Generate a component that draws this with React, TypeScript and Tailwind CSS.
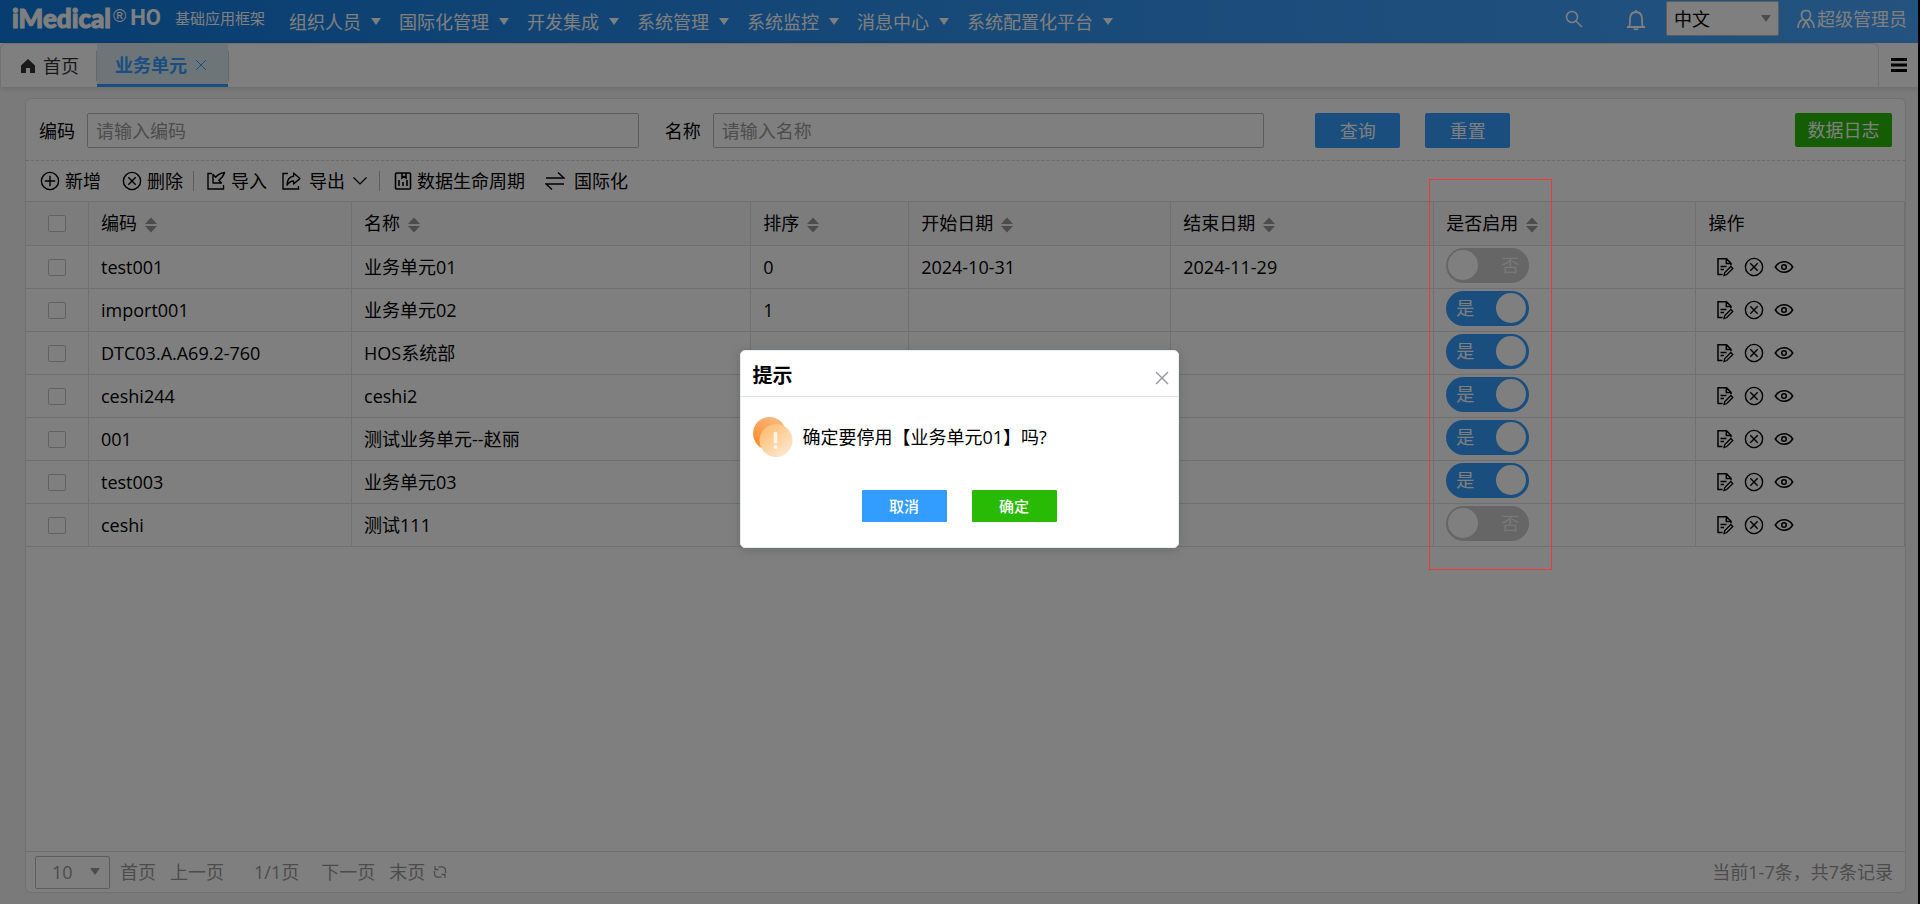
import React from "react";

const TEXT = "font-['Open_Sans','Noto_Sans_CJK_SC',sans-serif]";

const navItems = ["组织人员", "国际化管理", "开发集成", "系统管理", "系统监控", "消息中心", "系统配置化平台"];

type Row = { code: string; name: string; order: string; start: string; end: string; on: boolean };

const rows: Row[] = [
  { code: "test001", name: "业务单元01", order: "0", start: "2024-10-31", end: "2024-11-29", on: false },
  { code: "import001", name: "业务单元02", order: "1", start: "", end: "", on: true },
  { code: "DTC03.A.A69.2-760", name: "HOS系统部", order: "", start: "", end: "", on: true },
  { code: "ceshi244", name: "ceshi2", order: "", start: "", end: "", on: true },
  { code: "001", name: "测试业务单元--赵丽", order: "", start: "", end: "", on: true },
  { code: "test003", name: "业务单元03", order: "", start: "", end: "", on: true },
  { code: "ceshi", name: "测试111", order: "", start: "", end: "", on: false },
];

const columns = [
  { label: "编码", width: "w-[14%]", sortable: true },
  { label: "名称", width: "w-[21.25%]", sortable: true },
  { label: "排序", width: "w-[8.4%]", sortable: true },
  { label: "开始日期", width: "w-[13.95%]", sortable: true },
  { label: "结束日期", width: "w-[14%]", sortable: true },
  { label: "是否启用", width: "w-[13.95%]", sortable: true },
  { label: "操作", width: "", sortable: false },
];

function Caret({ className }: { className?: string }) {
  return (
    <svg viewBox="0 0 10 8" className={className ?? "h-2 w-2.5"} fill="currentColor" aria-hidden="true">
      <path d="M0 0h10L5 7z" />
    </svg>
  );
}

function CircleIcon({ cross }: { cross?: boolean }) {
  return (
    <svg viewBox="0 0 20 20" className="size-5 shrink-0" fill="none" stroke="currentColor" strokeWidth="1.4" aria-hidden="true">
      <circle cx="10" cy="10" r="8.6" />
      {cross ? <path d="M6.3 6.3l7.4 7.4M13.7 6.3l-7.4 7.4" /> : <path d="M10 4.8v10.4M4.8 10h10.4" />}
    </svg>
  );
}

function ImportIcon() {
  return (
    <svg viewBox="0 0 20 20" className="size-5 shrink-0" fill="none" stroke="currentColor" strokeWidth="1.4" aria-hidden="true">
      <path d="M6 2.500H2V18h15.500v-4" />
      <path d="M7 3.500v8.500h8.500l-2.700-2.700c2.700-1.800 4.700-4.300 5.700-7.800-3.500.5-6.500 1.800-8.800 4.700z" strokeLinejoin="round" />
    </svg>
  );
}

function ExportIcon() {
  return (
    <svg viewBox="0 0 20 20" className="size-5 shrink-0" fill="none" stroke="currentColor" strokeWidth="1.4" aria-hidden="true">
      <path d="M7 2.500H2V18h15.500v-3" />
      <path d="M12.600 2l6.200 5.600-6.200 5.400v-3c-3 0-5 1.400-6.600 4.200 0-5 2.400-8.400 6.600-9z" strokeLinejoin="round" />
    </svg>
  );
}

function ReportIcon() {
  return (
    <svg viewBox="0 0 18 20" className="h-5 w-[18px] shrink-0" fill="none" stroke="currentColor" strokeWidth="1.6" aria-hidden="true">
      <rect x="1.5" y="2" width="15" height="16" rx="1" />
      <path d="M8 2v5l2-1.400L12 7V2M5 9v6M9 11v4M13 9v6" />
    </svg>
  );
}

function SwapIcon() {
  return (
    <svg viewBox="0 0 20 20" className="size-5 shrink-0" fill="none" stroke="currentColor" strokeWidth="1.4" aria-hidden="true">
      <path d="M1 7h18L13 1.500M19 13H1l6 5.500" />
    </svg>
  );
}

function EditIcon() {
  return (
    <svg viewBox="0 0 18 20" className="h-5 w-[18px]" fill="none" stroke="currentColor" strokeWidth="1.5" aria-hidden="true">
      <path d="M6.500 17.500H2V1.800h8.500l4.500 4.500v2M10.300 2v4.500H15M4.500 9.500h6M4.500 12.500h3.500" />
      <path d="M8 18.500l.8-3 6-6 2 2-6 6z" strokeWidth="1.3" />
    </svg>
  );
}

function EyeIcon() {
  return (
    <svg viewBox="0 0 20 20" className="size-5" fill="none" stroke="currentColor" strokeWidth="1.5" aria-hidden="true">
      <path d="M1.300 10C3.500 6.500 6.500 4.800 10 4.800s6.500 1.700 8.700 5.200c-2.200 3.500-5.200 5.200-8.700 5.200S3.500 13.500 1.300 10z" />
      <circle cx="10" cy="10" r="2.3" />
    </svg>
  );
}

function SortIcon() {
  return (
    <svg viewBox="0 0 12 16" className="mt-1 h-4 w-3" fill="#999999" aria-hidden="true">
      <path d="M6 0.500L12 7H0zM6 15.500L0 9h12z" />
    </svg>
  );
}

function Checkbox({ label }: { label: string }) {
  return (
    <input
      type="checkbox"
      aria-label={label}
      className="block h-[17px] w-[18px] appearance-none rounded-xs border border-[#c4c4c4] bg-white"
    />
  );
}

function Toggle({ on, label }: { on: boolean; label: string }) {
  return (
    <button
      type="button"
      role="switch"
      aria-checked={on}
      aria-label={label}
      className={
        on
          ? "flex h-[35px] w-[83px] items-center justify-between rounded-full bg-[#339dff] pr-[3px] pl-2.5 text-white"
          : "flex h-[35px] w-[83px] flex-row-reverse items-center justify-between rounded-full bg-[#cccccc] pr-2.5 pl-0.5 text-[#f0f0f0]"
      }
    >
      <span>{on ? "是" : "否"}</span>
      <span className="size-[30px] rounded-full bg-white" />
    </button>
  );
}

function Header() {
  return (
    <header className="flex h-[43px] shrink-0 items-center bg-linear-to-r from-[#0e7ae0] via-[#2b91f0] via-45% to-[#48a6ff] text-white">
      <div className="ml-3 flex h-9 items-center self-start">
        <span className="font-[Lato,'Open_Sans',sans-serif] text-[26px] font-black [-webkit-text-stroke:1px_white]">iMedical</span>
        <span className="ml-0.5 pb-1 font-['Liberation_Sans',sans-serif] text-lg">®</span>
        <span className="ml-1 font-[Roboto,sans-serif] text-[22px] font-bold">HO</span>
        <span className="ml-3.5 text-[15px]">基础应用框架</span>
      </div>
      <nav className="ml-6 flex items-center gap-[18px]">
        {navItems.map((item) => (
          <button key={item} type="button" className="flex items-center gap-2.5 whitespace-nowrap">
            {item}
            <Caret />
          </button>
        ))}
      </nav>
      <div className="ml-auto flex h-[37px] items-center self-start pr-[11px]">
        <button type="button" aria-label="搜索" className="mr-[43px]">
          <svg viewBox="0 0 18 18" className="size-[18px]" fill="none" stroke="currentColor" strokeWidth="1.5">
            <circle cx="7" cy="7" r="5.5" />
            <path d="M11 11l6 6" />
          </svg>
        </button>
        <button type="button" aria-label="通知" className="mr-5 pt-0.5">
          <svg viewBox="0 0 20 22" className="h-[22px] w-5" fill="none" stroke="currentColor" strokeWidth="1.8">
            <path d="M1 18h18M3 18c1-1.500 1-3 1-7.500C4 6 6 3 10 3s6 3 6 7.500c0 4.500 0 6 1 7.500M10 3V1M8 19.500c.6 1.300 3.400 1.300 4 0" />
          </svg>
        </button>
        <div className="relative mr-[18px]">
          <select aria-label="语言" className="block h-[35px] w-[113px] appearance-none rounded-xs border border-[#bbbbbb] bg-white pl-[7px] text-black">
            <option>中文</option>
          </select>
          <Caret className="pointer-events-none absolute top-3.5 right-2 h-2 w-2.5 text-[#999999]" />
        </div>
        <button type="button" className="flex items-center gap-0.5">
          <svg viewBox="0 0 18 20" className="h-5 w-[18px]" fill="none" stroke="currentColor" strokeWidth="1.7" aria-hidden="true">
            <path d="M9 1.500c3 0 4.500 2 4.500 4.500 0 3-2 5.500-4.500 5.500S4.500 9 4.500 6c0-2.500 1.500-4.500 4.500-4.500zM5.500 10.500C2.500 12 1 15 1 19M12.500 10.500c3 1.500 4.500 4.500 4.500 8.500M5.500 19L9 12l3.500 7" />
          </svg>
          超级管理员
        </button>
      </div>
    </header>
  );
}

function TabBar() {
  return (
    <div className="flex h-11 shrink-0 bg-white shadow-[0_2px_6px_rgba(0,0,0,0.12)]">
      <div className="flex flex-1 items-center rounded-t-md border-x border-t border-[#e0e0e0]">
        <a href="#home" className="flex w-[95px] items-center justify-center gap-2 pl-[3px] text-[#333333]">
          <svg viewBox="0 0 14 14" className="size-3.5" fill="currentColor" aria-hidden="true">
            <path d="M7 0l7 6.500V14H9V9H5v5H0V6.500z" />
          </svg>
          首页
        </a>
        <span className="h-[30px] w-px bg-[#cccccc]" />
        <div className="flex w-[131px] items-center gap-2 self-stretch border-b-[3px] border-[#339dff] bg-[#daebf2] pt-0.5 pl-[18px] text-[#339dff]">
          <a href="#unit" className="font-bold">业务单元</a>
          <button type="button" aria-label="关闭">
            <svg viewBox="0 0 12 12" className="size-3" fill="none" stroke="currentColor" aria-hidden="true">
              <path d="M1 1l10 10M11 1L1 11" />
            </svg>
          </button>
        </div>
        <span className="h-[30px] w-px bg-[#cccccc]" />
      </div>
      <button type="button" aria-label="菜单" className="flex w-[39px] items-center justify-center text-black">
        <svg viewBox="0 0 16 14" className="h-3.5 w-4" fill="currentColor" aria-hidden="true">
          <path d="M0 0h16v3H0zM0 5.500h16v3H0zM0 11h16v3H0z" />
        </svg>
      </button>
    </div>
  );
}

function SearchForm() {
  const input = "ml-3 h-[35px] min-w-0 flex-1 rounded-xs border border-[#bbbbbb] bg-white px-2 placeholder:text-[#999999]";
  return (
    <form className="flex h-[62px] shrink-0 items-center border-b border-dashed border-[#d4d4d4] pt-0.5 pr-[13px] pl-[13px]">
      <div className="flex flex-[68] items-center">
        <label htmlFor="code">编码</label>
        <input id="code" placeholder="请输入编码" className={input} />
        <label htmlFor="name" className="ml-[26px]">名称</label>
        <input id="name" placeholder="请输入名称" className={input} />
      </div>
      <div className="ml-[51px] flex flex-[32] gap-[25px] text-white">
        <button type="button" className="h-[35px] w-[85px] rounded-xs bg-[#339dff]">查询</button>
        <button type="button" className="h-[35px] w-[85px] rounded-xs bg-[#339dff]">重置</button>
        <button type="button" className="ml-auto h-[34px] w-[97px] rounded-xs bg-[#28ba05]">数据日志</button>
      </div>
    </form>
  );
}

function Toolbar() {
  const item = "flex items-center gap-[5px]";
  return (
    <div className="flex h-10 shrink-0 items-center pl-3.5">
      <button type="button" className={item}><CircleIcon />新增</button>
      <button type="button" className={item + " ml-[21px]"}><CircleIcon cross />删除</button>
      <span className="mr-3 ml-2.5 h-5 w-px bg-[#bbbbbb]" />
      <button type="button" className={item}><ImportIcon />导入</button>
      <button type="button" className="ml-3.5 flex items-center gap-2">
        <ExportIcon />导出
        <svg viewBox="0 0 14 8" className="h-2 w-3.5" fill="none" stroke="currentColor" strokeWidth="1.2" aria-hidden="true">
          <path d="M.5 .5L7 7l6.500-6.500" />
        </svg>
      </button>
      <span className="mr-3.5 ml-3 h-5 w-px bg-[#bbbbbb]" />
      <button type="button" className={item}><ReportIcon />数据生命周期</button>
      <button type="button" className="ml-5 flex items-center gap-[9px]"><SwapIcon />国际化</button>
    </div>
  );
}

function UnitTable() {
  const cell = "border-r border-b border-[#e0e0e0] px-3 py-0 text-left font-normal whitespace-nowrap";
  return (
    <table className="w-full table-fixed border-separate border-spacing-0 border-t border-[#e0e0e0]">
      <thead>
        <tr className="h-11 bg-[#f9f9f9]">
          <th className={cell + " w-[63px]"}>
            <div className="flex justify-center"><Checkbox label="全选" /></div>
          </th>
          {columns.map((c) => (
            <th key={c.label} className={cell + " " + c.width}>
              <div className="flex items-center gap-2 pb-0.5">
                {c.label}
                {c.sortable && <SortIcon />}
              </div>
            </th>
          ))}
        </tr>
      </thead>
      <tbody>
        {rows.map((r) => (
          <tr key={r.code} className="h-[43px]">
            <td className={cell}>
              <div className="flex justify-center"><Checkbox label={r.code} /></div>
            </td>
            <td className={cell}>{r.code}</td>
            <td className={cell}>{r.name}</td>
            <td className={cell}>{r.order}</td>
            <td className={cell}>{r.start}</td>
            <td className={cell}>{r.end}</td>
            <td className={cell}>
              <div className="pb-1"><Toggle on={r.on} label={r.name} /></div>
            </td>
            <td className={cell}>
              <div className="flex items-center gap-2.5 pl-2">
                <button type="button" aria-label="编辑"><EditIcon /></button>
                <button type="button" aria-label="删除"><CircleIcon cross /></button>
                <button type="button" aria-label="查看"><EyeIcon /></button>
              </div>
            </td>
          </tr>
        ))}
      </tbody>
    </table>
  );
}

function Pagination() {
  return (
    <footer className="flex h-[41px] shrink-0 items-center border-t border-[#e0e0e0] pr-3 pl-[9px] text-[#999999]">
      <div className="relative">
        <select aria-label="每页条数" className="block h-[33px] w-[75px] appearance-none rounded-xs border border-[#bbbbbb] bg-white pl-4">
          <option>10</option>
        </select>
        <Caret className="pointer-events-none absolute top-3 right-2.5 h-2 w-2.5" />
      </div>
      <button type="button" className="ml-2.5">首页</button>
      <button type="button" className="ml-3.5">上一页</button>
      <span className="ml-[30px]">1/1页</span>
      <button type="button" className="ml-[22px]">下一页</button>
      <button type="button" className="ml-3.5">末页</button>
      <button type="button" aria-label="刷新" className="ml-2">
        <svg viewBox="0 0 14 14" className="size-3.5" fill="none" stroke="currentColor" strokeWidth="1.3">
          <path d="M5.500 1.800H9A3.500 3.500 0 0 1 12.500 5.300V8M8.500 12.200H5A3.500 3.500 0 0 1 1.500 8.700V6M2 1v3.500h3.500M12 13V9.500H8.500" />
        </svg>
      </button>
      <span className="ml-auto">当前1-7条，共7条记录</span>
    </footer>
  );
}

function WarningIcon() {
  return (
    <svg viewBox="0 0 40 40" className="size-10 shrink-0" aria-hidden="true">
      <defs>
        <linearGradient id="back" x1="1" y1="0" x2="0.3" y2="1">
          <stop offset="0" stopColor="#f8c18e" />
          <stop offset="1" stopColor="#fb8c2c" />
        </linearGradient>
        <linearGradient id="front" x1="0" y1="0" x2="0.8" y2="1">
          <stop offset="0" stopColor="#ffb765" />
          <stop offset="1" stopColor="#ffe8d2" />
        </linearGradient>
      </defs>
      <circle cx="16.5" cy="16.5" r="16.5" fill="url(#back)" />
      <circle cx="23" cy="23.5" r="16.5" fill="url(#front)" />
      <path d="M22.500 16.500v8.500" stroke="#fff4e8" strokeWidth="3.6" strokeLinecap="round" />
      <circle cx="22.5" cy="30" r="2" fill="#fff4e8" />
    </svg>
  );
}

function ConfirmDialog() {
  return (
    <div className="absolute inset-0 flex items-center justify-center bg-black/50 pb-1.5">
      <div role="dialog" aria-modal="true" aria-labelledby="dialog-title" className="w-[439px] rounded-[5px] border border-[#e8ecf5] bg-white shadow-[0_2px_12px_rgba(0,0,0,0.15)]">
        <div className="flex h-[46px] items-center justify-between border-b border-[#dfe1e6] pt-1 pr-[9px] pl-3">
          <h2 id="dialog-title" className="text-xl font-bold">提示</h2>
          <button type="button" aria-label="关闭" className="pt-1">
            <svg viewBox="0 0 14 14" className="size-3.5" fill="none" stroke="#909399" strokeWidth="1.3" aria-hidden="true">
              <path d="M1 1l12 12M13 1L1 13" />
            </svg>
          </button>
        </div>
        <div className="flex items-center gap-2.5 px-3 pt-5">
          <WarningIcon />
          <p>确定要停用【业务单元01】吗?</p>
        </div>
        <div className="flex justify-center gap-[25px] pt-[33px] pb-[25px] text-[15px] font-medium text-white">
          <button type="button" className="h-8 w-[85px] rounded-[1px] bg-[#339dff]">取消</button>
          <button type="button" className="h-8 w-[85px] rounded-[1px] bg-[#28ba05]">确定</button>
        </div>
      </div>
    </div>
  );
}

export default function App() {
  return (
    <div className={TEXT + " relative flex min-h-screen flex-col border-r-2 border-black bg-[#f5f5f5] text-lg leading-6 text-black"}>
      <Header />
      <TabBar />
      <main className="mt-[11px] mr-3 mb-[11px] ml-[25px] flex flex-1 flex-col rounded-md border border-[#e0e0e0] bg-white">
        <SearchForm />
        <Toolbar />
        <UnitTable />
        <div className="flex-1" />
        <Pagination />
      </main>
      <ConfirmDialog />
      <div className="pointer-events-none absolute top-[179px] left-[1429px] h-[391px] w-[123px] border border-[#ee3a36]" />
    </div>
  );
}
